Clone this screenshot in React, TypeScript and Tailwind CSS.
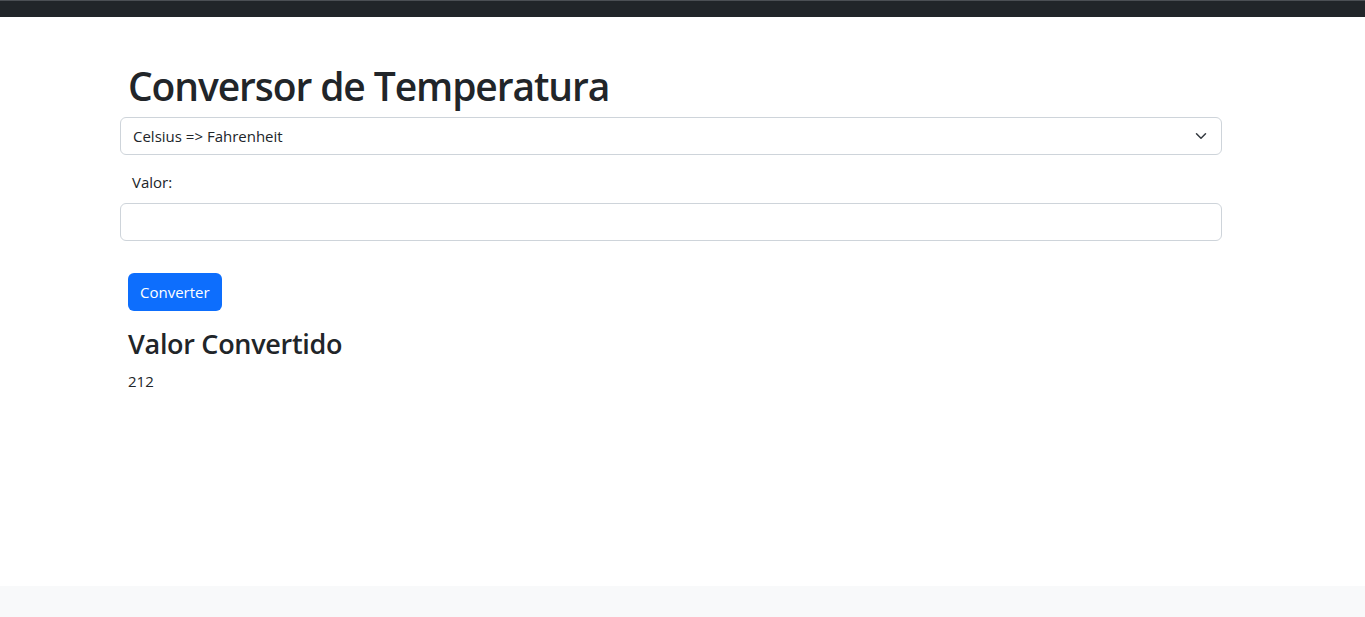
import React from "react";

export default function App() {
  return (
    <div className="min-h-[617px] flex flex-col bg-white text-[#212529]" style={{ fontFamily: '"Open Sans", "Noto Sans", sans-serif' }}>
      <div className="h-[17px] bg-[#212529] border-t border-[#4b4f54]" />
      <main className="flex-1">
        <div className="ml-[120px] w-[1102px] pt-[45px]">
          <h1 className="pl-[8px] text-[39px] leading-[48px] font-semibold tracking-[-1.1px] mb-[7px]">Conversor de Temperatura</h1>
          <div className="relative h-[38px] border border-[#ced4da] rounded-[6px] flex items-center pl-[12px] text-[15px]">
            <span>Celsius =&gt; Fahrenheit</span>
            <svg className="absolute right-[14px] top-[12px]" width="12" height="12" viewBox="0 0 16 16" fill="none">
              <path d="M2 5l6 6 6-6" stroke="#343a40" strokeWidth="2" strokeLinecap="round" strokeLinejoin="round" />
            </svg>
          </div>
          <div className="pl-[12px] pt-[15px] pb-[9px] text-[15px] leading-[24px]">Valor:</div>
          <div className="h-[38px] border border-[#ced4da] rounded-[6px]" />
          <div className="pl-[8px] pt-[32px]">
            <button className="h-[38px] px-[12px] bg-[#0d6efd] text-white text-[15px] rounded-[6px]">Converter</button>
            <h3 className="text-[27px] leading-[34px] font-semibold tracking-[-0.3px] mt-[16px] mb-[8px]">Valor Convertido</h3>
            <p className="text-[15px] leading-[24px]">212</p>
          </div>
        </div>
      </main>
      <footer className="h-[31px] bg-[#f8f9fa]" />
    </div>
  );
}
